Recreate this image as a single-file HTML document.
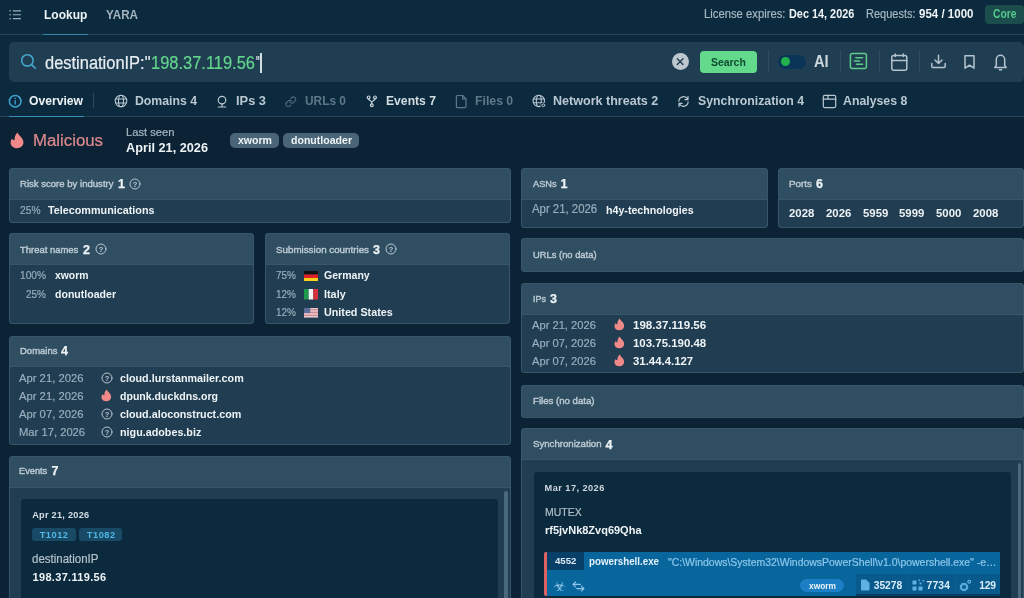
<!DOCTYPE html>
<html lang="en"><head><meta charset="utf-8"><title>Lookup</title>
<style>
html,body{margin:0;padding:0}
body{width:1024px;height:598px;overflow:hidden;position:relative;background:#0b2334;font-family:"Liberation Sans", sans-serif;}
#app{position:absolute;left:0;top:0;width:1024px;height:598px;overflow:hidden;will-change:transform}
#app div,#app svg,#app span{position:absolute;display:block}
#app span{white-space:pre;line-height:20px;height:20px;transform-origin:0 50%}
#app b{position:static;display:inline-block;width:0;height:0}
</style></head><body><div id="app">
<div style="left:0px;top:0px;width:1024px;height:117px;background:#0c2a3d;"></div>
<div style="left:0px;top:34px;width:1024px;height:1px;background:#25465a;"></div>
<div style="left:0px;top:116px;width:1024px;height:1px;background:#25465a;"></div>
<div style="left:43px;top:33.5px;width:45px;height:1.4px;background:#3a87ae;"></div>
<div style="left:9px;top:42px;width:1014.5px;height:40px;background:#203e52;border-radius:5px;"></div>
<div style="left:9px;top:115.7px;width:74.7px;height:1.5px;background:#3a8db6;"></div>
<div style="left:93px;top:93px;width:1px;height:14.5px;background:#2b4a5e;"></div>
<div style="left:767.5px;top:50px;width:1px;height:22px;background:#2e4c60;"></div>
<div style="left:840px;top:50px;width:1px;height:22px;background:#2e4c60;"></div>
<div style="left:879px;top:50px;width:1px;height:22px;background:#2e4c60;"></div>
<div style="left:918.5px;top:50px;width:1px;height:22px;background:#2e4c60;"></div>
<div style="left:9px;top:168px;width:501.5px;height:54.9px;background:#203d51;border-radius:4px;overflow:hidden;box-shadow:inset 0 0 0 1px #37566a;"><div style="left:0;top:0;width:100%;height:31.5px;background:#2f4e61;box-shadow:inset 0 0 0 1px #37566a;border-radius:4px 4px 0 0"></div></div>
<div style="left:9px;top:233px;width:245px;height:90.6px;background:#203d51;border-radius:4px;overflow:hidden;box-shadow:inset 0 0 0 1px #37566a;"><div style="left:0;top:0;width:100%;height:31.5px;background:#2f4e61;box-shadow:inset 0 0 0 1px #37566a;border-radius:4px 4px 0 0"></div></div>
<div style="left:265.1px;top:233px;width:245.4px;height:90.6px;background:#203d51;border-radius:4px;overflow:hidden;box-shadow:inset 0 0 0 1px #37566a;"><div style="left:0;top:0;width:100%;height:31.5px;background:#2f4e61;box-shadow:inset 0 0 0 1px #37566a;border-radius:4px 4px 0 0"></div></div>
<div style="left:9px;top:335.5px;width:501.5px;height:109px;background:#203d51;border-radius:4px;overflow:hidden;box-shadow:inset 0 0 0 1px #37566a;"><div style="left:0;top:0;width:100%;height:31.5px;background:#2f4e61;box-shadow:inset 0 0 0 1px #37566a;border-radius:4px 4px 0 0"></div></div>
<div style="left:9px;top:455.5px;width:501.5px;height:164.5px;background:#203d51;border-radius:4px;overflow:hidden;box-shadow:inset 0 0 0 1px #37566a;"><div style="left:0;top:0;width:100%;height:32px;background:#2f4e61;box-shadow:inset 0 0 0 1px #37566a;border-radius:4px 4px 0 0"></div></div>
<div style="left:521px;top:168px;width:246.5px;height:59.5px;background:#203d51;border-radius:4px;overflow:hidden;box-shadow:inset 0 0 0 1px #37566a;"><div style="left:0;top:0;width:100%;height:31.5px;background:#2f4e61;box-shadow:inset 0 0 0 1px #37566a;border-radius:4px 4px 0 0"></div></div>
<div style="left:778.2px;top:168px;width:245.8px;height:59.5px;background:#203d51;border-radius:4px;overflow:hidden;box-shadow:inset 0 0 0 1px #37566a;"><div style="left:0;top:0;width:100%;height:31.5px;background:#2f4e61;box-shadow:inset 0 0 0 1px #37566a;border-radius:4px 4px 0 0"></div></div>
<div style="left:521px;top:238px;width:503px;height:34px;background:#2f4e61;border-radius:4px;box-shadow:inset 0 0 0 1px #37566a;"></div>
<div style="left:521px;top:283px;width:503px;height:90px;background:#203d51;border-radius:4px;overflow:hidden;box-shadow:inset 0 0 0 1px #37566a;"><div style="left:0;top:0;width:100%;height:31.5px;background:#2f4e61;box-shadow:inset 0 0 0 1px #37566a;border-radius:4px 4px 0 0"></div></div>
<div style="left:521px;top:385px;width:503px;height:32.5px;background:#2f4e61;border-radius:4px;box-shadow:inset 0 0 0 1px #37566a;"></div>
<div style="left:521px;top:428px;width:503px;height:192px;background:#203d51;border-radius:4px;overflow:hidden;box-shadow:inset 0 0 0 1px #37566a;"><div style="left:0;top:0;width:100%;height:32px;background:#2f4e61;box-shadow:inset 0 0 0 1px #37566a;border-radius:4px 4px 0 0"></div></div>
<div style="left:21px;top:498.5px;width:476.5px;height:121.5px;background:#0c2a3e;border-radius:3px;"></div>
<div style="left:534px;top:471.5px;width:476.5px;height:148.5px;background:#0c2a3e;border-radius:3px;"></div>
<div style="left:504px;top:491px;width:4px;height:129px;background:#4b697c;border-radius:2px;"></div>
<div style="left:1018px;top:462.5px;width:3.2px;height:157.5px;background:#4b697c;border-radius:2px;"></div>
<div style="left:544.3px;top:552.1px;width:455.7px;height:43.9px;background:#09669d;border-radius:2px 0 0 2px;"></div>
<div style="left:544.3px;top:552.1px;width:2.9px;height:43.9px;background:#dd6160;border-radius:2px 0 0 2px;"></div>
<div style="left:547.2px;top:552.1px;width:36.5px;height:18.3px;background:#083f68;"></div>
<div style="left:856px;top:574px;width:144px;height:20.2px;background:#08598c;"></div>
<div style="left:856px;top:594.2px;width:144px;height:1.8px;background:#0a3d62;"></div>
<div style="left:906.5px;top:574px;width:1px;height:20.2px;background:#0a6197;"></div>
<div style="left:954.5px;top:574px;width:1px;height:20.2px;background:#0a6197;"></div>
<div style="left:800px;top:579px;width:44px;height:12.5px;background:#1c7fc5;border-radius:7px;"></div>
<div style="left:985px;top:5.2px;width:39px;height:18.5px;background:#1c4d4d;border-radius:4px;"></div>
<div style="left:700px;top:51px;width:57px;height:22px;background:#63d98c;border-radius:4px;"></div>
<div style="left:778px;top:54.5px;width:28.2px;height:14.5px;background:#0a3556;border-radius:8px;"></div>
<div style="left:781.2px;top:57.3px;width:9.2px;height:9.2px;background:#23b14d;border-radius:50%;"></div>
<div style="left:671.5px;top:53px;width:17px;height:17px;background:#bcc7d0;border-radius:50%;"></div>
<div style="left:259.8px;top:52.7px;width:2.2px;height:19.9px;background:#d3dde4;"></div>
<div style="left:230.3px;top:132.9px;width:48.9px;height:14.7px;background:#4b6578;border-radius:5px;"></div>
<div style="left:283px;top:132.9px;width:76px;height:14.7px;background:#4b6578;border-radius:5px;"></div>
<div style="left:31.7px;top:528.4px;width:43.9px;height:12.3px;background:#184965;border-radius:3px;"></div>
<div style="left:79.3px;top:528.4px;width:42.9px;height:12.3px;background:#184965;border-radius:3px;"></div>
<svg style="left:129.1px;top:177.5px" width="12" height="12" viewBox="0 0 12 12" fill="none" stroke="#b7c6d0" stroke-width="1" stroke-linecap="round" stroke-linejoin="round" ><circle cx="6" cy="6" r="5"/><text x="6" y="8.6" font-size="7.5" font-weight="bold" text-anchor="middle" fill="#b7c6d0" stroke="none" font-family="Liberation Sans, sans-serif">?</text></svg>
<svg style="left:95.1px;top:243.2px" width="12" height="12" viewBox="0 0 12 12" fill="none" stroke="#b7c6d0" stroke-width="1" stroke-linecap="round" stroke-linejoin="round" ><circle cx="6" cy="6" r="5"/><text x="6" y="8.6" font-size="7.5" font-weight="bold" text-anchor="middle" fill="#b7c6d0" stroke="none" font-family="Liberation Sans, sans-serif">?</text></svg>
<svg style="left:385.1px;top:243.2px" width="12" height="12" viewBox="0 0 12 12" fill="none" stroke="#b7c6d0" stroke-width="1" stroke-linecap="round" stroke-linejoin="round" ><circle cx="6" cy="6" r="5"/><text x="6" y="8.6" font-size="7.5" font-weight="bold" text-anchor="middle" fill="#b7c6d0" stroke="none" font-family="Liberation Sans, sans-serif">?</text></svg>
<svg style="left:9px;top:9px" width="13" height="12" viewBox="0 0 13 12" fill="none" stroke="#9db0bd" stroke-width="1.2" stroke-linecap="round" stroke-linejoin="round" ><path d="M4.300 1.800H11.500M4.300 5.750H11.500M4.300 9.700H11.500"/><path d="M1.100 1.800h.1M1.100 5.750h.1M1.100 9.700h.1" stroke-width="1.500"/></svg>
<svg style="left:20px;top:53.3px" width="17" height="17" viewBox="0 0 17 17" fill="none" stroke="#47abd2" stroke-width="1.5" stroke-linecap="round" stroke-linejoin="round" ><circle cx="7.400" cy="7.400" r="5.700"/><path d="M11.600 11.600L15.300 15.200"/></svg>
<svg style="left:8px;top:94px" width="14.4" height="14.4" viewBox="0 0 14.4 14.4" fill="none" stroke="#3fa3cf" stroke-width="1.5" stroke-linecap="round" stroke-linejoin="round" ><circle cx="7.200" cy="7.200" r="5.800"/><path d="M7.200 6.600v3.500" stroke-width="1.300"/><path d="M7.200 4.300v.1" stroke-width="1.400"/></svg>
<svg style="left:114px;top:94.2px" width="14" height="14" viewBox="0 0 14 14" fill="none" stroke="#b9c8d2" stroke-width="1.1" stroke-linecap="round" stroke-linejoin="round" ><circle cx="7" cy="7" r="5.8"/><ellipse cx="7" cy="7" rx="2.5" ry="5.8"/><path d="M1.7 5h10.6M1.7 9h10.6"/></svg>
<svg style="left:216.4px;top:94.5px" width="12" height="14" viewBox="0 0 12 14" fill="none" stroke="#b9c8d2" stroke-width="1.2" stroke-linecap="round" stroke-linejoin="round" ><circle cx="6" cy="5.1" r="3.8"/><path d="M6 8.9v3M2.3 12h7.4"/></svg>
<svg style="left:285.4px;top:95.6px" width="11.6" height="11.6" viewBox="0 0 24 24" fill="none" stroke="#506b7d" stroke-width="2.3" stroke-linecap="round" stroke-linejoin="round" ><path d="M10 13a5 5 0 0 0 7.54.54l3-3a5 5 0 0 0-7.07-7.07l-1.72 1.71"/><path d="M14 11a5 5 0 0 0-7.54-.54l-3 3a5 5 0 0 0 7.07 7.07l1.71-1.71"/></svg>
<svg style="left:365.8px;top:94.7px" width="12" height="13" viewBox="0 0 12 13" fill="none" stroke="#c6d2da" stroke-width="1.2" stroke-linecap="round" stroke-linejoin="round" ><circle cx="2.600" cy="2.400" r="1.400"/><circle cx="9" cy="2.400" r="1.400"/><circle cx="5.800" cy="10.300" r="1.400"/><path d="M2.600 3.800c0 2.400 3.200 1.600 3.200 3.600M9 3.800c0 2.400-3.200 1.600-3.200 3.600M5.800 7.400v1.500"/></svg>
<svg style="left:454.6px;top:94.3px" width="13" height="15" viewBox="0 0 13 15" fill="none" stroke="#5f7889" stroke-width="1.2" stroke-linecap="round" stroke-linejoin="round" ><path d="M2.4 1.5h5.2l3.4 3.4v7.7a1 1 0 0 1-1 1H2.4a1 1 0 0 1-1-1V2.5a1 1 0 0 1 1-1z"/><path d="M7.6 1.5v3.4H11"/></svg>
<svg style="left:531.8px;top:94px" width="14" height="14" viewBox="0 0 14 14" fill="none" stroke="#b9c8d2" stroke-width="1.1" stroke-linecap="round" stroke-linejoin="round" ><circle cx="6.800" cy="6.900" r="5.700"/><ellipse cx="6.800" cy="6.900" rx="2.500" ry="5.700"/><path d="M1.500 5h10.600M1.500 8.800h10.600"/><circle cx="11.300" cy="11.300" r="2.900" fill="#0c2a3d" stroke="none"/><circle cx="11.300" cy="11.300" r="1.400" stroke-width="1"/></svg>
<svg style="left:677.3px;top:94.9px" width="13" height="13" viewBox="0 0 13 13" fill="none" stroke="#b9c8d2" stroke-width="1.2" stroke-linecap="round" stroke-linejoin="round" ><path d="M1.900 6.200A4.600 4.600 0 0 1 10.600 4.200M11 1.500V4.600H7.900M11.100 6.800A4.600 4.600 0 0 1 2.400 8.800M2 11.500V8.400H5.100"/></svg>
<svg style="left:821.5px;top:94.2px" width="15" height="15" viewBox="0 0 15 15" fill="none" stroke="#b9c8d2" stroke-width="1.2" stroke-linecap="round" stroke-linejoin="round" ><rect x="1.3" y="1.4" width="12.4" height="12.2" rx="1.6"/><path d="M1.3 5.2h12.4M6 1.4v3.8"/></svg>
<svg style="left:675px;top:56px" width="11" height="11" viewBox="0 0 11 11" fill="none" stroke="#1f3d51" stroke-width="1.4" stroke-linecap="round" stroke-linejoin="round" ><path d="M2.300 2.800L8 8.500M8 2.800L2.300 8.500"/></svg>
<svg style="left:849px;top:52.2px" width="19" height="18" viewBox="0 0 19 18" fill="none" stroke="#5ecb8a" stroke-width="1.5" stroke-linecap="round" stroke-linejoin="round" ><rect x="1.4" y="1.5" width="16" height="15" rx="2"/><path d="M6.8 5.8h6.8M5.3 9h5.2M7.4 12.2h6.2"/></svg>
<svg style="left:889.5px;top:52px" width="19" height="20" viewBox="0 0 19 20" fill="none" stroke="#b4c3ce" stroke-width="1.5" stroke-linecap="round" stroke-linejoin="round" ><rect x="1.8" y="3.6" width="15" height="14.6" rx="2"/><path d="M1.8 8.400h15M5.300 2v2.600M13.300 2v2.600"/></svg>
<svg style="left:929.5px;top:54px" width="17" height="15" viewBox="0 0 17 15" fill="none" stroke="#b4c3ce" stroke-width="1.5" stroke-linecap="round" stroke-linejoin="round" ><path d="M8.5 1.2v8M5 6l3.500 3.500L12 6M1.800 9.600v3a1 1 0 0 0 1 1h11.400a1 1 0 0 0 1-1v-3"/></svg>
<svg style="left:962.5px;top:54px" width="13" height="16" viewBox="0 0 13 16" fill="none" stroke="#b4c3ce" stroke-width="1.5" stroke-linecap="round" stroke-linejoin="round" ><path d="M2 1.800h9v12.400l-4.500-3-4.500 3z"/></svg>
<svg style="left:993px;top:53.5px" width="15" height="17" viewBox="0 0 15 17" fill="none" stroke="#b4c3ce" stroke-width="1.5" stroke-linecap="round" stroke-linejoin="round" ><path d="M3.300 11.600V5.500a4.200 4.200 0 0 1 8.400 0v6.100l1.500 1.800H1.800z"/><path d="M6.400 15.700h2.200"/></svg>
<svg style="left:10px;top:132px" width="14.0" height="17.0" viewBox="0 0 14 17" fill="#f08a88"  ><path d="M7.600 0.600C8.200 2.600 10.200 4 11.800 6C13 7.600 13.400 9 13.400 10.600C13.400 13.800 10.600 16.300 7 16.300C3.400 16.300 0.600 13.800 0.600 10.800C0.600 9.200 1.200 7.800 2.100 6.800C2.600 7.800 3.600 8.300 4.600 8.100C4.200 5.400 5.400 2.400 7.600 0.600Z"/></svg>
<svg style="left:100.8px;top:371.8px" width="12" height="12" viewBox="0 0 12 12" fill="none" stroke="#b7c6d0" stroke-width="1" stroke-linecap="round" stroke-linejoin="round" ><circle cx="6" cy="6" r="5"/><text x="6" y="8.600" font-size="7.500" font-weight="bold" text-anchor="middle" fill="#b7c6d0" stroke="none" font-family="Liberation Sans, sans-serif">?</text></svg>
<svg style="left:101.2px;top:389.29999999999995px" width="10.57" height="12.84" viewBox="0 0 14 17" fill="#f08a88"  ><path d="M7.600 0.600C8.200 2.600 10.200 4 11.800 6C13 7.600 13.400 9 13.400 10.600C13.400 13.800 10.600 16.300 7 16.300C3.400 16.300 0.600 13.800 0.600 10.800C0.600 9.200 1.200 7.800 2.100 6.800C2.600 7.800 3.600 8.300 4.600 8.100C4.200 5.400 5.400 2.400 7.600 0.600Z"/></svg>
<svg style="left:100.8px;top:408px" width="12" height="12" viewBox="0 0 12 12" fill="none" stroke="#b7c6d0" stroke-width="1" stroke-linecap="round" stroke-linejoin="round" ><circle cx="6" cy="6" r="5"/><text x="6" y="8.600" font-size="7.500" font-weight="bold" text-anchor="middle" fill="#b7c6d0" stroke="none" font-family="Liberation Sans, sans-serif">?</text></svg>
<svg style="left:100.8px;top:426px" width="12" height="12" viewBox="0 0 12 12" fill="none" stroke="#b7c6d0" stroke-width="1" stroke-linecap="round" stroke-linejoin="round" ><circle cx="6" cy="6" r="5"/><text x="6" y="8.600" font-size="7.500" font-weight="bold" text-anchor="middle" fill="#b7c6d0" stroke="none" font-family="Liberation Sans, sans-serif">?</text></svg>
<svg style="left:613.9px;top:317.8px" width="10.57" height="12.84" viewBox="0 0 14 17" fill="#f08a88"  ><path d="M7.600 0.600C8.200 2.600 10.200 4 11.800 6C13 7.600 13.400 9 13.400 10.600C13.400 13.800 10.600 16.300 7 16.300C3.400 16.300 0.600 13.800 0.600 10.800C0.600 9.200 1.200 7.800 2.100 6.800C2.600 7.800 3.600 8.300 4.600 8.100C4.200 5.400 5.400 2.400 7.600 0.600Z"/></svg>
<svg style="left:613.9px;top:336.1px" width="10.57" height="12.84" viewBox="0 0 14 17" fill="#f08a88"  ><path d="M7.600 0.600C8.200 2.600 10.200 4 11.800 6C13 7.600 13.400 9 13.400 10.600C13.400 13.800 10.600 16.300 7 16.300C3.400 16.300 0.600 13.800 0.600 10.800C0.600 9.200 1.200 7.800 2.100 6.800C2.600 7.800 3.600 8.300 4.600 8.100C4.200 5.400 5.400 2.400 7.600 0.600Z"/></svg>
<svg style="left:613.9px;top:354.40000000000003px" width="10.57" height="12.84" viewBox="0 0 14 17" fill="#f08a88"  ><path d="M7.600 0.600C8.200 2.600 10.200 4 11.800 6C13 7.600 13.400 9 13.400 10.600C13.400 13.800 10.600 16.300 7 16.300C3.400 16.300 0.600 13.800 0.600 10.800C0.600 9.200 1.200 7.800 2.100 6.800C2.600 7.800 3.600 8.300 4.600 8.100C4.200 5.400 5.400 2.400 7.600 0.600Z"/></svg>
<svg style="left:304px;top:270.7px" width="14" height="10.500" viewBox="0 0 14 10.500"><rect width="14" height="3.500" fill="#111"/><rect y="3.500" width="14" height="3.500" fill="#dd1f26"/><rect y="7" width="14" height="3.500" fill="#f7cf1d"/></svg>
<svg style="left:304px;top:289.2px" width="14" height="10.500" viewBox="0 0 14 10.500"><rect width="4.700" height="10.500" fill="#1f9a4c"/><rect x="4.700" width="4.600" height="10.500" fill="#f4f4f4"/><rect x="9.300" width="4.700" height="10.500" fill="#d8303c"/></svg>
<svg style="left:304px;top:307.7px" width="14" height="10.500" viewBox="0 0 14 10.500"><rect width="14" height="9.600" fill="#e6c9ce"/><path d="M0 1.700h14M0 4.500h14M0 7.300h14" stroke="#d08b96" stroke-width="1.300"/><rect width="6.200" height="5" fill="#5d6d9b"/></svg>
<svg style="left:571.5px;top:581px" width="13" height="11" viewBox="0 0 13 11" fill="none" stroke="#8fc6ea" stroke-width="1.1" stroke-linecap="round" stroke-linejoin="round" ><path d="M3.600 1L1 3.400L3.600 5.800M1 3.400H8.300M9.400 5.200L12 7.600L9.400 10M12 7.600H4.700"/></svg>
<svg style="left:860.2px;top:579.2px" width="10" height="12" viewBox="0 0 10 12" fill="#5fb0e3"  ><path d="M1 1.500a1 1 0 0 1 1-1h4l3.500 3.500v6.500a1 1 0 0 1-1 1H2a1 1 0 0 1-1-1z"/></svg>
<svg style="left:912px;top:579px" width="13" height="12" viewBox="0 0 13 12" fill="#5fb0e3"  ><rect x="0.500" y="1.500" width="4" height="4" /><rect x="0.500" y="7.500" width="4" height="4"/><rect x="6.500" y="7.500" width="4" height="4"/><rect x="7.500" y="3.500" width="2" height="2"/><rect x="10.500" y="1" width="1.500" height="1.500"/><rect x="6.500" y="0.500" width="1.500" height="1.500"/></svg>
<svg style="left:959px;top:578.5px" width="13" height="13" viewBox="0 0 13 13" fill="none" stroke="#5fb0e3" stroke-width="1.2" stroke-linecap="round" stroke-linejoin="round" ><circle cx="5" cy="8" r="2.600"/><circle cx="5" cy="8" r="3.700" stroke-dasharray="1.600 1.300" stroke-width="1.200"/><circle cx="10.200" cy="2.800" r="1.400"/></svg>
<span style="left:44px;top:5px;font-size:13px;color:#eef3f6;font-weight:bold;transform:scaleX(0.9225);">Lookup</span>
<span style="left:106px;top:5px;font-size:13px;color:#a3b4c0;font-weight:bold;transform:scaleX(0.8975);">YARA</span>
<span style="left:704px;top:4px;font-size:12px;color:#a6b7c3;transform:scaleX(0.9398);-webkit-text-stroke:0.2px #a6b7c3;">License expires:</span>
<span style="left:789px;top:4px;font-size:12px;color:#eef3f6;font-weight:bold;transform:scaleX(0.9062);">Dec 14, 2026</span>
<span style="left:866px;top:4px;font-size:12px;color:#a6b7c3;transform:scaleX(0.9161);-webkit-text-stroke:0.2px #a6b7c3;">Requests:</span>
<span style="left:919px;top:4px;font-size:12px;color:#eef3f6;font-weight:bold;transform:scaleX(0.9609);">954 / 1000</span>
<span style="left:992.6px;top:4px;font-size:12px;color:#55c98d;font-weight:bold;transform:scaleX(0.8558);">Core</span>
<span style="left:44.5px;top:53px;font-size:18px;color:#e8eef2;transform:scaleX(0.9137);-webkit-text-stroke:0.2px #e8eef2;">destinationIP:"</span>
<span style="left:151px;top:53px;font-size:18px;color:#62d68c;transform:scaleX(0.9140);-webkit-text-stroke:0.2px #62d68c;">198.37.119.56</span>
<span style="left:256px;top:53px;font-size:18px;color:#e8eef2;transform:scaleX(0.5633);-webkit-text-stroke:0.2px #e8eef2;">"</span>
<span style="left:710.6px;top:52px;font-size:11px;color:#0f4a33;font-weight:bold;transform:scaleX(0.9481);">Search</span>
<span style="left:813.8px;top:52px;font-size:16px;color:#cbd6dd;font-weight:bold;transform:scaleX(0.9188);">AI</span>
<span style="left:29px;top:91px;font-size:13px;color:#eef3f6;font-weight:bold;transform:scaleX(0.9338);">Overview</span>
<span style="left:135.3px;top:91px;font-size:13px;color:#b9c8d2;font-weight:bold;transform:scaleX(0.9445);">Domains 4</span>
<span style="left:236px;top:91px;font-size:13px;color:#b9c8d2;font-weight:bold;transform:scaleX(0.9882);">IPs 3</span>
<span style="left:305.4px;top:91px;font-size:13px;color:#5f7889;font-weight:bold;transform:scaleX(0.9130);">URLs 0</span>
<span style="left:385.5px;top:91px;font-size:13px;color:#d2dce3;font-weight:bold;transform:scaleX(0.9349);">Events 7</span>
<span style="left:474.8px;top:91px;font-size:13px;color:#5f7889;font-weight:bold;transform:scaleX(0.9439);">Files 0</span>
<span style="left:553px;top:91px;font-size:13px;color:#b9c8d2;font-weight:bold;transform:scaleX(0.9652);">Network threats 2</span>
<span style="left:697.5px;top:91px;font-size:13px;color:#b9c8d2;font-weight:bold;transform:scaleX(0.9467);">Synchronization 4</span>
<span style="left:843px;top:91px;font-size:13px;color:#b9c8d2;font-weight:bold;transform:scaleX(0.9465);">Analyses 8</span>
<span style="left:33.1px;top:131px;font-size:16px;color:#de898e;transform:scaleX(1.0497);-webkit-text-stroke:0.2px #de898e;">Malicious</span>
<span style="left:125.5px;top:122px;font-size:11px;color:#a6b7c3;transform:scaleX(1.0167);-webkit-text-stroke:0.2px #a6b7c3;">Last seen</span>
<span style="left:125.5px;top:138px;font-size:13px;color:#eef3f6;font-weight:bold;transform:scaleX(0.9782);">April 21, 2026</span>
<span style="left:237.5px;top:130px;font-size:11px;color:#eef3f6;font-weight:bold;transform:scaleX(0.9586);">xworm</span>
<span style="left:290.5px;top:130px;font-size:11px;color:#eef3f6;font-weight:bold;transform:scaleX(0.9597);">donutloader</span>
<span style="left:19.5px;top:174px;font-size:9.3px;color:#bccad3;transform:scaleX(1.0282);-webkit-text-stroke:0.4px #bccad3;">Risk score by industry</span>
<span style="left:118px;top:174px;font-size:12.5px;color:#eef3f6;font-weight:bold;-webkit-text-stroke:0.25px #eef3f6;">1</span>
<span style="left:20px;top:240px;font-size:9.3px;color:#bccad3;transform:scaleX(1.0164);-webkit-text-stroke:0.4px #bccad3;">Threat names</span>
<span style="left:83px;top:240px;font-size:12.5px;color:#eef3f6;font-weight:bold;-webkit-text-stroke:0.25px #eef3f6;">2</span>
<span style="left:276px;top:240px;font-size:9.3px;color:#bccad3;transform:scaleX(1.0523);-webkit-text-stroke:0.4px #bccad3;">Submission countries</span>
<span style="left:373px;top:240px;font-size:12.5px;color:#eef3f6;font-weight:bold;-webkit-text-stroke:0.25px #eef3f6;">3</span>
<span style="left:19.5px;top:341px;font-size:9.3px;color:#bccad3;transform:scaleX(1.0221);-webkit-text-stroke:0.4px #bccad3;">Domains</span>
<span style="left:61px;top:341px;font-size:12.5px;color:#eef3f6;font-weight:bold;-webkit-text-stroke:0.25px #eef3f6;">4</span>
<span style="left:19.3px;top:461px;font-size:9.3px;color:#bccad3;transform:scaleX(0.9922);-webkit-text-stroke:0.4px #bccad3;">Events</span>
<span style="left:51.5px;top:461px;font-size:12.5px;color:#eef3f6;font-weight:bold;-webkit-text-stroke:0.25px #eef3f6;">7</span>
<span style="left:532.5px;top:174px;font-size:9.3px;color:#bccad3;transform:scaleX(0.9888);-webkit-text-stroke:0.4px #bccad3;">ASNs</span>
<span style="left:560.5px;top:174px;font-size:12.5px;color:#eef3f6;font-weight:bold;-webkit-text-stroke:0.25px #eef3f6;">1</span>
<span style="left:789px;top:174px;font-size:9.3px;color:#bccad3;transform:scaleX(1.0598);-webkit-text-stroke:0.4px #bccad3;">Ports</span>
<span style="left:816px;top:174px;font-size:12.5px;color:#eef3f6;font-weight:bold;-webkit-text-stroke:0.25px #eef3f6;">6</span>
<span style="left:532.5px;top:245px;font-size:9.3px;color:#bccad3;transform:scaleX(1.0072);-webkit-text-stroke:0.4px #bccad3;">URLs (no data)</span>
<span style="left:532.5px;top:289px;font-size:9.3px;color:#bccad3;transform:scaleX(0.9674);-webkit-text-stroke:0.4px #bccad3;">IPs</span>
<span style="left:550px;top:289px;font-size:12.5px;color:#eef3f6;font-weight:bold;-webkit-text-stroke:0.25px #eef3f6;">3</span>
<span style="left:532.5px;top:391px;font-size:9.3px;color:#bccad3;transform:scaleX(1.0347);-webkit-text-stroke:0.4px #bccad3;">Files (no data)</span>
<span style="left:532.5px;top:434px;font-size:9.3px;color:#bccad3;transform:scaleX(1.0354);-webkit-text-stroke:0.4px #bccad3;">Synchronization</span>
<span style="left:605.5px;top:435px;font-size:12.5px;color:#eef3f6;font-weight:bold;-webkit-text-stroke:0.25px #eef3f6;">4</span>
<span style="left:19.5px;top:200px;font-size:11.5px;color:#98aebd;transform:scaleX(0.8901);-webkit-text-stroke:0.2px #98aebd;">25%</span>
<span style="left:48px;top:200px;font-size:11.5px;color:#eef3f6;font-weight:bold;transform:scaleX(0.9379);">Telecommunications</span>
<span style="left:20px;top:265px;font-size:11.5px;color:#98aebd;transform:scaleX(0.8837);-webkit-text-stroke:0.2px #98aebd;">100%</span>
<span style="left:54.5px;top:265px;font-size:11.5px;color:#eef3f6;font-weight:bold;transform:scaleX(0.9035);">xworm</span>
<span style="left:26px;top:284px;font-size:11.5px;color:#98aebd;transform:scaleX(0.8684);-webkit-text-stroke:0.2px #98aebd;">25%</span>
<span style="left:54.5px;top:284px;font-size:11.5px;color:#eef3f6;font-weight:bold;transform:scaleX(0.9179);">donutloader</span>
<span style="left:276px;top:265px;font-size:11.5px;color:#98aebd;transform:scaleX(0.8684);-webkit-text-stroke:0.2px #98aebd;">75%</span>
<span style="left:324.3px;top:265px;font-size:11.5px;color:#eef3f6;font-weight:bold;transform:scaleX(0.9166);">Germany</span>
<span style="left:276px;top:284px;font-size:11.5px;color:#98aebd;transform:scaleX(0.8684);-webkit-text-stroke:0.2px #98aebd;">12%</span>
<span style="left:324.3px;top:284px;font-size:11.5px;color:#eef3f6;font-weight:bold;transform:scaleX(0.9428);">Italy</span>
<span style="left:276px;top:302px;font-size:11.5px;color:#98aebd;transform:scaleX(0.8684);-webkit-text-stroke:0.2px #98aebd;">12%</span>
<span style="left:324.3px;top:302px;font-size:11.5px;color:#eef3f6;font-weight:bold;transform:scaleX(0.9347);">United States</span>
<span style="left:18.9px;top:368px;font-size:11.5px;color:#98aebd;transform:scaleX(0.9778);-webkit-text-stroke:0.2px #98aebd;">Apr 21, 2026</span>
<span style="left:120px;top:368px;font-size:11.5px;color:#eef3f6;font-weight:bold;transform:scaleX(0.9350);">cloud.lurstanmailer.com</span>
<span style="left:18.9px;top:386px;font-size:11.5px;color:#98aebd;transform:scaleX(0.9778);-webkit-text-stroke:0.2px #98aebd;">Apr 21, 2026</span>
<span style="left:120px;top:386px;font-size:11.5px;color:#eef3f6;font-weight:bold;transform:scaleX(0.9184);">dpunk.duckdns.org</span>
<span style="left:18.9px;top:404px;font-size:11.5px;color:#98aebd;transform:scaleX(0.9778);-webkit-text-stroke:0.2px #98aebd;">Apr 07, 2026</span>
<span style="left:120px;top:404px;font-size:11.5px;color:#eef3f6;font-weight:bold;transform:scaleX(0.9351);">cloud.aloconstruct.com</span>
<span style="left:18.9px;top:422px;font-size:11.5px;color:#98aebd;transform:scaleX(0.9754);-webkit-text-stroke:0.2px #98aebd;">Mar 17, 2026</span>
<span style="left:120px;top:422px;font-size:11.5px;color:#eef3f6;font-weight:bold;transform:scaleX(0.9357);">nigu.adobes.biz</span>
<span style="left:531.9px;top:199px;font-size:12px;color:#98aebd;transform:scaleX(0.9473);-webkit-text-stroke:0.2px #98aebd;">Apr 21, 2026</span>
<span style="left:605.7px;top:200px;font-size:11.5px;color:#eef3f6;font-weight:bold;transform:scaleX(0.9262);">h4y-technologies</span>
<span style="left:789.0px;top:203px;font-size:11.5px;color:#eef3f6;font-weight:bold;transform:scaleX(0.9885);">2028</span>
<span style="left:825.8px;top:203px;font-size:11.5px;color:#eef3f6;font-weight:bold;transform:scaleX(0.9885);">2026</span>
<span style="left:862.6px;top:203px;font-size:11.5px;color:#eef3f6;font-weight:bold;transform:scaleX(0.9885);">5959</span>
<span style="left:899.4px;top:203px;font-size:11.5px;color:#eef3f6;font-weight:bold;transform:scaleX(0.9885);">5999</span>
<span style="left:936.2px;top:203px;font-size:11.5px;color:#eef3f6;font-weight:bold;transform:scaleX(0.9885);">5000</span>
<span style="left:973.0px;top:203px;font-size:11.5px;color:#eef3f6;font-weight:bold;transform:scaleX(0.9885);">2008</span>
<span style="left:531.9px;top:315px;font-size:11.5px;color:#98aebd;transform:scaleX(0.9702);-webkit-text-stroke:0.2px #98aebd;">Apr 21, 2026</span>
<span style="left:633.3px;top:315px;font-size:11.5px;color:#eef3f6;font-weight:bold;transform:scaleX(1.0038);">198.37.119.56</span>
<span style="left:531.9px;top:333px;font-size:11.5px;color:#98aebd;transform:scaleX(0.9702);-webkit-text-stroke:0.2px #98aebd;">Apr 07, 2026</span>
<span style="left:633.3px;top:333px;font-size:11.5px;color:#eef3f6;font-weight:bold;transform:scaleX(0.9953);">103.75.190.48</span>
<span style="left:531.9px;top:351px;font-size:11.5px;color:#98aebd;transform:scaleX(0.9702);-webkit-text-stroke:0.2px #98aebd;">Apr 07, 2026</span>
<span style="left:633.3px;top:351px;font-size:11.5px;color:#eef3f6;font-weight:bold;transform:scaleX(0.9907);">31.44.4.127</span>
<span style="left:32.2px;top:505px;font-size:9.2px;color:#d6dfe5;font-weight:bold;letter-spacing:0.260px;">Apr 21, 2026</span>
<span style="left:39.7px;top:525px;font-size:9.3px;color:#4fb6e6;font-weight:bold;letter-spacing:0.481px;">T1012</span>
<span style="left:86.8px;top:525px;font-size:9.3px;color:#4fb6e6;font-weight:bold;letter-spacing:0.506px;">T1082</span>
<span style="left:32.2px;top:549px;font-size:12px;color:#b4c2cc;transform:scaleX(0.9583);-webkit-text-stroke:0.2px #b4c2cc;">destinationIP</span>
<span style="left:32.5px;top:567px;font-size:11px;color:#eef3f6;font-weight:bold;letter-spacing:0.329px;">198.37.119.56</span>
<span style="left:544.6px;top:478px;font-size:9.2px;color:#cdd7de;font-weight:bold;letter-spacing:0.459px;">Mar 17, 2026</span>
<span style="left:544.9px;top:502px;font-size:10.7px;color:#b0bfca;transform:scaleX(0.9811);-webkit-text-stroke:0.2px #b0bfca;">MUTEX</span>
<span style="left:544.5px;top:520px;font-size:11.5px;color:#eef3f6;font-weight:bold;transform:scaleX(0.9554);">rf5jvNk8Zvq69Qha</span>
<span style="left:554.5px;top:551px;font-size:9.5px;color:#dbe8f2;font-weight:bold;transform:scaleX(1.0170);">4552</span>
<span style="left:589.4px;top:551px;font-size:11px;color:#e4f1fa;font-weight:bold;transform:scaleX(0.8875);">powershell.exe</span>
<span style="left:668px;top:552px;font-size:10.5px;color:#8cc7eb;transform:scaleX(0.9949);-webkit-text-stroke:0.2px #8cc7eb;">"C:\Windows\System32\WindowsPowerShell\v1.0\powershell.exe" -e…</span>
<span style="left:808.5px;top:576px;font-size:9px;color:#eef3f6;font-weight:bold;transform:scaleX(0.9305);">xworm</span>
<span style="left:873.7px;top:576px;font-size:10.3px;color:#dcedf9;font-weight:bold;letter-spacing:-0.010px;">35278</span>
<span style="left:926.5px;top:576px;font-size:10.3px;color:#dcedf9;font-weight:bold;letter-spacing:0.193px;">7734</span>
<span style="left:979.3px;top:576px;font-size:10.3px;color:#dcedf9;font-weight:bold;letter-spacing:-0.244px;">129</span>
<span style="left:553.2px;top:576px;font-size:14px;color:#8fc6ea;font-family:'DejaVu Sans',sans-serif;">☣</span>
</div></body></html>
